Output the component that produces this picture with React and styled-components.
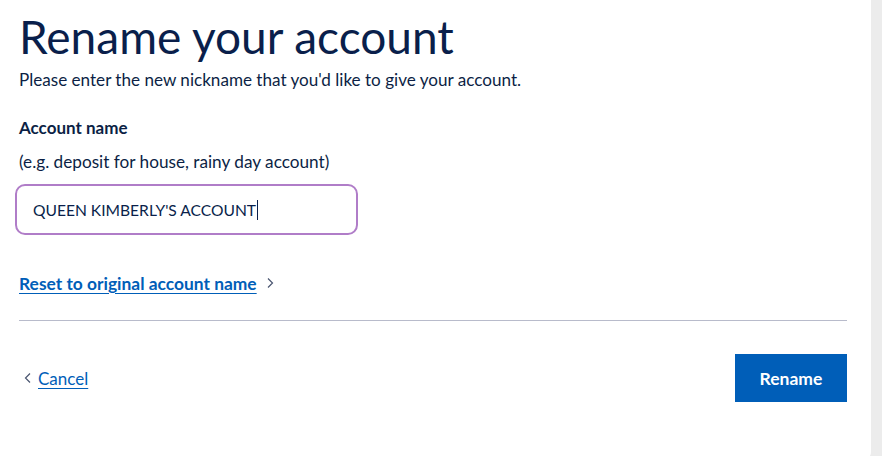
import * as React from "react";
import styled, { createGlobalStyle } from "styled-components";

const GlobalStyle = createGlobalStyle`
  html, body {
    margin: 0;
    padding: 0;
    background: #ececec;
    font-family: Lato, "Open Sans", sans-serif;
    color: #0c1f45;
  }
`;

/* ---- Page shell ---- */

const Shell = styled.div`
  display: flex;
  flex-direction: row;
  height: 456px;
  overflow: hidden;
`;

const Card = styled.main`
  width: 871px;
  height: 460px;
  background: #ffffff;
  border-bottom-right-radius: 8px;
  box-sizing: border-box;
  padding: 6px 24px 0 19px;
`;

/* ---- Heading ---- */

const Title = styled.h1`
  margin: 0;
  font-size: 46px;
  font-weight: 400;
  line-height: 62px;
  color: #0a1f4b;
`;

const Lead = styled.p`
  margin: 0;
  font-size: 17.1px;
  line-height: 24px;
`;

/* ---- Form ---- */

const Field = styled.div`
  display: flex;
  flex-direction: column;
  margin-top: 24px;
`;

const Label = styled.label`
  font-size: 17px;
  font-weight: 700;
  line-height: 24px;
`;

const Hint = styled.div`
  margin-top: 10px;
  font-size: 17.2px;
  line-height: 24px;
`;

const InputBox = styled.div`
  display: flex;
  align-items: center;
  margin: 10px 0 0 -4px;
  width: 343px;
  height: 51px;
  box-sizing: border-box;
  border: 2px solid #b07dc8;
  border-radius: 10px;
  padding: 0 16px;
  font-size: 15.6px;
  color: #0a1f4b;
`;

const Caret = styled.span`
  display: inline-block;
  width: 1px;
  height: 20px;
  margin-left: 1px;
  background: #0a1f4b;
`;

const TextLink = styled.a`
  display: inline-flex;
  align-items: center;
  gap: ${(p) => (p.$strong ? 9 : 6)}px;
  font-size: ${(p) => (p.$strong ? 17.4 : 17)}px;
  font-weight: ${(p) => (p.$strong ? 700 : 400)};
  color: #005eb8;
  text-decoration: none;

  span {
    text-decoration: underline;
    text-underline-offset: 3px;
  }
`;

const Chevron = styled.svg`
  width: 8px;
  height: 12px;
  flex: none;
`;

const ResetRow = styled.div`
  margin-top: 36px;
  height: 24px;
  display: flex;
  align-items: center;
`;

const Divider = styled.hr`
  margin: 25px 0 0 0;
  border: none;
  border-top: 1px solid #b8bbcb;
`;

/* ---- Actions ---- */

const Actions = styled.div`
  display: flex;
  justify-content: space-between;
  align-items: center;
  margin-top: 33px;
  padding-left: 5px;
`;

const PrimaryButton = styled.button`
  width: 112px;
  height: 48px;
  border: none;
  background: #005eb8;
  color: #ffffff;
  font-family: inherit;
  font-size: 17.5px;
  font-weight: 700;
`;

const ChevronRight = () => (
  <Chevron viewBox="0 0 8 12">
    <path d="M2 1.5 L6.5 6 L2 10.5" fill="none" stroke="#4a5570" strokeWidth="1.2" />
  </Chevron>
);

const ChevronLeft = () => (
  <Chevron viewBox="0 0 8 12">
    <path d="M6 1.5 L1.5 6 L6 10.5" fill="none" stroke="#4a5570" strokeWidth="1.2" />
  </Chevron>
);

export default function App() {
  return (
    <Shell>
      <GlobalStyle />
      <Card>
        <Title>Rename your account</Title>
        <Lead>Please enter the new nickname that you'd like to give your account.</Lead>

        <Field>
          <Label>Account name</Label>
          <Hint>(e.g. deposit for house, rainy day account)</Hint>
          <InputBox>
            QUEEN KIMBERLY'S ACCOUNT
            <Caret />
          </InputBox>
        </Field>

        <ResetRow>
          <TextLink href="#reset" $strong>
            <span>Reset to original account name</span>
            <ChevronRight />
          </TextLink>
        </ResetRow>

        <Divider />

        <Actions>
          <TextLink href="#cancel">
            <ChevronLeft />
            <span>Cancel</span>
          </TextLink>
          <PrimaryButton>Rename</PrimaryButton>
        </Actions>
      </Card>
    </Shell>
  );
}
